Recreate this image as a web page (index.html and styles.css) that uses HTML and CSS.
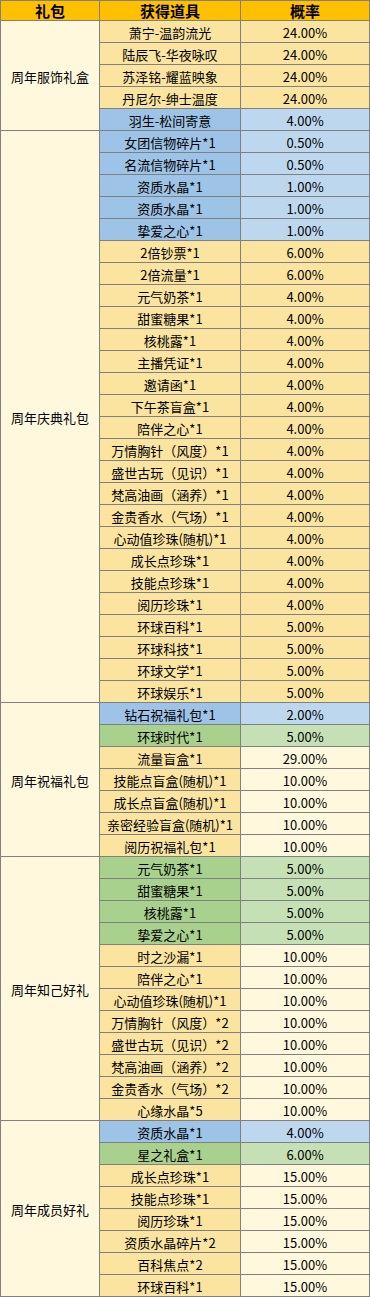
FILE: index.html
```html
<!DOCTYPE html>
<html lang="zh-CN">
<head>
<meta charset="utf-8">
<title>礼包概率</title>
<link rel="stylesheet" href="styles.css">
</head>
<body>
<div class="sheet">
  <div class="cell head">礼包</div>
  <div class="cell head">获得道具</div>
  <div class="cell head">概率</div>

  <div class="cell pack span5">周年服饰礼盒</div>
  <div class="cell item y">萧宁-温韵流光</div><div class="cell rate y">24.00%</div>
  <div class="cell item y">陆辰飞-华夜咏叹</div><div class="cell rate y">24.00%</div>
  <div class="cell item y">苏泽铭-耀蓝映象</div><div class="cell rate y">24.00%</div>
  <div class="cell item y">丹尼尔-绅士温度</div><div class="cell rate y">24.00%</div>
  <div class="cell item b">羽生-松间寄意</div><div class="cell rate bl">4.00%</div>

  <div class="cell pack span26">周年庆典礼包</div>
  <div class="cell item b">女团信物碎片*1</div><div class="cell rate bl">0.50%</div>
  <div class="cell item b">名流信物碎片*1</div><div class="cell rate bl">0.50%</div>
  <div class="cell item b">资质水晶*1</div><div class="cell rate bl">1.00%</div>
  <div class="cell item b">资质水晶*1</div><div class="cell rate bl">1.00%</div>
  <div class="cell item b">挚爱之心*1</div><div class="cell rate bl">1.00%</div>
  <div class="cell item y">2倍钞票*1</div><div class="cell rate y">6.00%</div>
  <div class="cell item y">2倍流量*1</div><div class="cell rate y">6.00%</div>
  <div class="cell item y">元气奶茶*1</div><div class="cell rate y">4.00%</div>
  <div class="cell item y">甜蜜糖果*1</div><div class="cell rate y">4.00%</div>
  <div class="cell item y">核桃露*1</div><div class="cell rate y">4.00%</div>
  <div class="cell item y">主播凭证*1</div><div class="cell rate y">4.00%</div>
  <div class="cell item y">邀请函*1</div><div class="cell rate y">4.00%</div>
  <div class="cell item y">下午茶盲盒*1</div><div class="cell rate y">4.00%</div>
  <div class="cell item y">陪伴之心*1</div><div class="cell rate y">4.00%</div>
  <div class="cell item y">万情胸针（风度）*1</div><div class="cell rate y">4.00%</div>
  <div class="cell item y">盛世古玩（见识）*1</div><div class="cell rate y">4.00%</div>
  <div class="cell item y">梵高油画（涵养）*1</div><div class="cell rate y">4.00%</div>
  <div class="cell item y">金贵香水（气场）*1</div><div class="cell rate y">4.00%</div>
  <div class="cell item y">心动值珍珠(随机)*1</div><div class="cell rate y">4.00%</div>
  <div class="cell item y">成长点珍珠*1</div><div class="cell rate y">4.00%</div>
  <div class="cell item y">技能点珍珠*1</div><div class="cell rate y">4.00%</div>
  <div class="cell item y">阅历珍珠*1</div><div class="cell rate y">4.00%</div>
  <div class="cell item y">环球百科*1</div><div class="cell rate y">5.00%</div>
  <div class="cell item y">环球科技*1</div><div class="cell rate y">5.00%</div>
  <div class="cell item y">环球文学*1</div><div class="cell rate y">5.00%</div>
  <div class="cell item y">环球娱乐*1</div><div class="cell rate y">5.00%</div>

  <div class="cell pack span7">周年祝福礼包</div>
  <div class="cell item b">钻石祝福礼包*1</div><div class="cell rate bl">2.00%</div>
  <div class="cell item g">环球时代*1</div><div class="cell rate gl">5.00%</div>
  <div class="cell item y">流量盲盒*1</div><div class="cell rate c">29.00%</div>
  <div class="cell item y">技能点盲盒(随机)*1</div><div class="cell rate c">10.00%</div>
  <div class="cell item y">成长点盲盒(随机)*1</div><div class="cell rate c">10.00%</div>
  <div class="cell item y">亲密经验盲盒(随机)*1</div><div class="cell rate c">10.00%</div>
  <div class="cell item y">阅历祝福礼包*1</div><div class="cell rate c">10.00%</div>

  <div class="cell pack span12">周年知己好礼</div>
  <div class="cell item g">元气奶茶*1</div><div class="cell rate gl">5.00%</div>
  <div class="cell item g">甜蜜糖果*1</div><div class="cell rate gl">5.00%</div>
  <div class="cell item g">核桃露*1</div><div class="cell rate gl">5.00%</div>
  <div class="cell item g">挚爱之心*1</div><div class="cell rate gl">5.00%</div>
  <div class="cell item y">时之沙漏*1</div><div class="cell rate c">10.00%</div>
  <div class="cell item y">陪伴之心*1</div><div class="cell rate c">10.00%</div>
  <div class="cell item y">心动值珍珠(随机)*1</div><div class="cell rate c">10.00%</div>
  <div class="cell item y">万情胸针（风度）*2</div><div class="cell rate c">10.00%</div>
  <div class="cell item y">盛世古玩（见识）*2</div><div class="cell rate c">10.00%</div>
  <div class="cell item y">梵高油画（涵养）*2</div><div class="cell rate c">10.00%</div>
  <div class="cell item y">金贵香水（气场）*2</div><div class="cell rate c">10.00%</div>
  <div class="cell item y">心缘水晶*5</div><div class="cell rate c">10.00%</div>

  <div class="cell pack span8">周年成员好礼</div>
  <div class="cell item b">资质水晶*1</div><div class="cell rate bl">4.00%</div>
  <div class="cell item g">星之礼盒*1</div><div class="cell rate gl">6.00%</div>
  <div class="cell item y">成长点珍珠*1</div><div class="cell rate c">15.00%</div>
  <div class="cell item y">技能点珍珠*1</div><div class="cell rate c">15.00%</div>
  <div class="cell item y">阅历珍珠*1</div><div class="cell rate c">15.00%</div>
  <div class="cell item y">资质水晶碎片*2</div><div class="cell rate c">15.00%</div>
  <div class="cell item y">百科焦点*2</div><div class="cell rate c">15.00%</div>
  <div class="cell item y">环球百科*1</div><div class="cell rate c">15.00%</div>
</div>
</body>
</html>
```

FILE: styles.css
```css
html, body {
  margin: 0;
  padding: 0;
  background: #ffffff;
}

.sheet {
  width: 370px;
  box-sizing: border-box;
  display: grid;
  grid-template-columns: 99px 141px 129px;
  grid-template-rows: 20px;
  grid-auto-rows: 22px;
  border-left: 1px solid #808080;
  border-top: 1px solid #808080;
  font-family: "Noto Sans CJK SC", "Noto Sans", sans-serif;
  font-size: 13px;
  color: #000000;
}

.cell {
  box-sizing: border-box;
  border-right: 1px solid #808080;
  border-bottom: 1px solid #808080;
  display: flex;
  align-items: center;
  justify-content: center;
  white-space: nowrap;
  line-height: 1;
  padding-top: 1px;
}

.head {
  background: #ffc000;
  font-weight: bold;
  font-size: 15px;
  padding-top: 0;
}

.pack {
  background: #fff8dc;
}

.span5 { grid-row: span 5; }
.span7 { grid-row: span 7; }
.span8 { grid-row: span 8; }
.span12 { grid-row: span 12; }
.span26 { grid-row: span 26; }

.y { background: #fae4a0; }
.b { background: #9dc3e6; }
.bl { background: #bdd7ee; }
.g { background: #a9d18e; }
.gl { background: #c5e0b4; }
.c { background: #fff8dc; }
```
